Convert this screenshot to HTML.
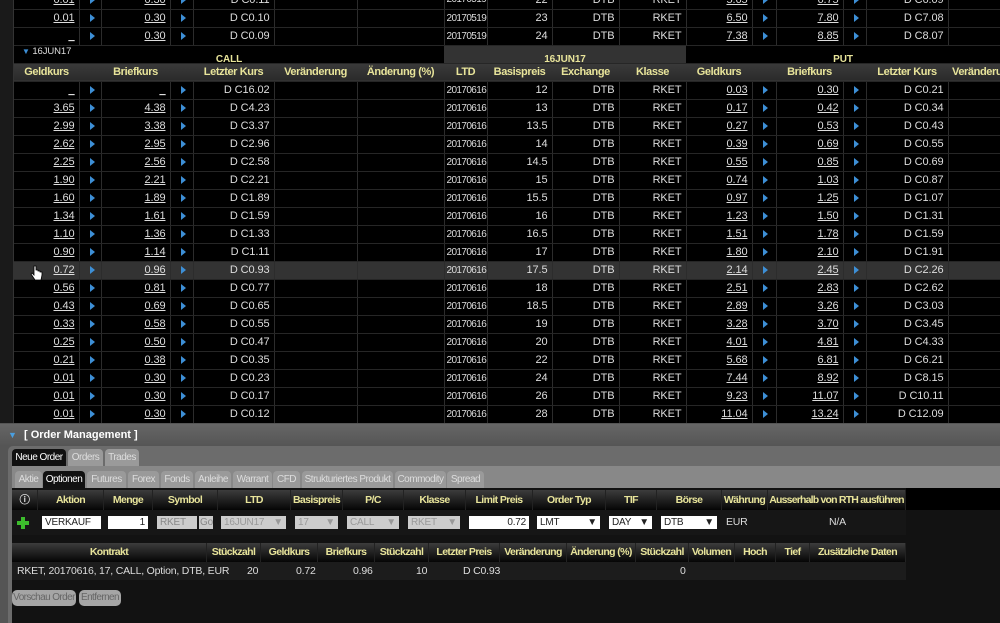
<!DOCTYPE html>
<html><head><meta charset="utf-8">
<style>
*{margin:0;padding:0;box-sizing:border-box}
body{width:1000px;height:623px;overflow:hidden;background:#111;font-family:"Liberation Sans",sans-serif;font-size:10.5px;letter-spacing:-0.2px;color:#ddd;position:relative;white-space:nowrap}
.abs{position:absolute}
table{border-collapse:collapse;table-layout:fixed}
#grid{left:14px;top:-9px;width:986px;font-size:11px;letter-spacing:-0.1px}
#grid td{height:18px;border-right:1px solid #2c2c2c;border-bottom:1px solid #262626;padding:0 4px;text-align:right;white-space:nowrap;overflow:hidden;background:#000}
#grid td.u{text-decoration:underline}
#grid td.l{text-align:left;padding-left:2px;padding-right:0;letter-spacing:-0.6px;font-size:10px}
#grid td.a{text-align:left;padding-left:10px}
#grid tr.hl td{background:#333}
#grid tr.h td{background:linear-gradient(#3a3a3a,#2a2a2a);color:#e8e49a;font-weight:bold;text-align:center;border-right:none;letter-spacing:-0.4px;padding:0}
.ar{display:inline-block;width:0;height:0;border-top:4px solid transparent;border-bottom:4px solid transparent;border-left:5px solid #3d8fd6;vertical-align:middle}
#lstrip{left:0;top:0;width:14px;height:424px;background:#1a1a1a;border-right:1px solid #333}
.y{color:#e8e49a;font-weight:bold}
#om{left:0;top:424px;width:1000px;height:22px;background:linear-gradient(#666,#555);color:#fff;font-weight:bold;font-size:11px;letter-spacing:0;line-height:22px;padding-left:24px}
.tab{position:absolute;height:17px;line-height:17px;text-align:center;background:#9a9a9a;color:#ddd;border-radius:4px 4px 0 0;font-size:10px;letter-spacing:-0.5px;overflow:hidden}
.tab.on{background:#111;color:#fff}
.th{background:linear-gradient(#3c3c3c,#050505);color:#e8e49a;font-weight:bold;text-align:center;height:20px;border-right:1px solid #222;white-space:nowrap;overflow:hidden;letter-spacing:-0.6px}
.in{position:absolute;height:13px;background:#fff;color:#222;font-size:10px;line-height:13px;padding:0 3px;overflow:hidden}
.in.g{background:#ccc;color:#888}
.btn{position:absolute;top:590px;height:16px;line-height:16px;background:#a5a5a5;color:#666;border-radius:5px;font-size:10px;letter-spacing:-0.6px;text-align:center;overflow:hidden}
</style></head><body>
<div class="abs" id="lstrip"></div>
<table class="abs" id="grid">
<colgroup><col style="width:65px"><col style="width:22px"><col style="width:69px"><col style="width:23px"><col style="width:81px"><col style="width:83px"><col style="width:87px"><col style="width:43px"><col style="width:65px"><col style="width:67px"><col style="width:67px"><col style="width:66px"><col style="width:24px"><col style="width:67px"><col style="width:23px"><col style="width:82px"><col style="width:52px"></colgroup>
<tr><td class="u">0.01</td><td class="a"><span class="ar"></span></td><td class="u">0.30</td><td class="a"><span class="ar"></span></td><td>D C0.11</td><td></td><td></td><td class="l">20170519</td><td>22</td><td>DTB</td><td>RKET</td><td class="u">5.65</td><td class="a"><span class="ar"></span></td><td class="u">6.75</td><td class="a"><span class="ar"></span></td><td>D C6.09</td><td></td></tr>
<tr><td class="u">0.01</td><td class="a"><span class="ar"></span></td><td class="u">0.30</td><td class="a"><span class="ar"></span></td><td>D C0.10</td><td></td><td></td><td class="l">20170519</td><td>23</td><td>DTB</td><td>RKET</td><td class="u">6.50</td><td class="a"><span class="ar"></span></td><td class="u">7.80</td><td class="a"><span class="ar"></span></td><td>D C7.08</td><td></td></tr>
<tr><td class="u">_</td><td class="a"><span class="ar"></span></td><td class="u">0.30</td><td class="a"><span class="ar"></span></td><td>D C0.09</td><td></td><td></td><td class="l">20170519</td><td>24</td><td>DTB</td><td>RKET</td><td class="u">7.38</td><td class="a"><span class="ar"></span></td><td class="u">8.85</td><td class="a"><span class="ar"></span></td><td>D C8.07</td><td></td></tr>
<tr><td colspan="7" style="background:#000;position:relative;text-align:center;border-right:none"><span style="position:absolute;left:8px;top:0;font-size:9.5px;color:#ddd"><span style="color:#3d8fd6;font-size:8px">▼</span> 16JUN17</span><span class="y" style="font-size:10px;position:relative;top:5px">CALL</span></td><td colspan="4" style="background:#333;text-align:center;border-right:none"><span class="y" style="font-size:10px;position:relative;top:5px">16JUN17</span></td><td colspan="6" style="background:#000;text-align:center;border-right:none"><span class="y" style="font-size:10px;position:relative;top:5px">PUT</span></td></tr>
<tr class="h"><td>Geldkurs</td><td></td><td>Briefkurs</td><td></td><td>Letzter Kurs</td><td>Veränderung</td><td>Änderung (%)</td><td>LTD</td><td>Basispreis</td><td>Exchange</td><td>Klasse</td><td>Geldkurs</td><td></td><td>Briefkurs</td><td></td><td>Letzter Kurs</td><td style="text-align:left;padding-left:4px">Veränderung</td></tr>
<tr><td class="u">_</td><td class="a"><span class="ar"></span></td><td class="u">_</td><td class="a"><span class="ar"></span></td><td>D C16.02</td><td></td><td></td><td class="l">20170616</td><td>12</td><td>DTB</td><td>RKET</td><td class="u">0.03</td><td class="a"><span class="ar"></span></td><td class="u">0.30</td><td class="a"><span class="ar"></span></td><td>D C0.21</td><td></td></tr>
<tr><td class="u">3.65</td><td class="a"><span class="ar"></span></td><td class="u">4.38</td><td class="a"><span class="ar"></span></td><td>D C4.23</td><td></td><td></td><td class="l">20170616</td><td>13</td><td>DTB</td><td>RKET</td><td class="u">0.17</td><td class="a"><span class="ar"></span></td><td class="u">0.42</td><td class="a"><span class="ar"></span></td><td>D C0.34</td><td></td></tr>
<tr><td class="u">2.99</td><td class="a"><span class="ar"></span></td><td class="u">3.38</td><td class="a"><span class="ar"></span></td><td>D C3.37</td><td></td><td></td><td class="l">20170616</td><td>13.5</td><td>DTB</td><td>RKET</td><td class="u">0.27</td><td class="a"><span class="ar"></span></td><td class="u">0.53</td><td class="a"><span class="ar"></span></td><td>D C0.43</td><td></td></tr>
<tr><td class="u">2.62</td><td class="a"><span class="ar"></span></td><td class="u">2.95</td><td class="a"><span class="ar"></span></td><td>D C2.96</td><td></td><td></td><td class="l">20170616</td><td>14</td><td>DTB</td><td>RKET</td><td class="u">0.39</td><td class="a"><span class="ar"></span></td><td class="u">0.69</td><td class="a"><span class="ar"></span></td><td>D C0.55</td><td></td></tr>
<tr><td class="u">2.25</td><td class="a"><span class="ar"></span></td><td class="u">2.56</td><td class="a"><span class="ar"></span></td><td>D C2.58</td><td></td><td></td><td class="l">20170616</td><td>14.5</td><td>DTB</td><td>RKET</td><td class="u">0.55</td><td class="a"><span class="ar"></span></td><td class="u">0.85</td><td class="a"><span class="ar"></span></td><td>D C0.69</td><td></td></tr>
<tr><td class="u">1.90</td><td class="a"><span class="ar"></span></td><td class="u">2.21</td><td class="a"><span class="ar"></span></td><td>D C2.21</td><td></td><td></td><td class="l">20170616</td><td>15</td><td>DTB</td><td>RKET</td><td class="u">0.74</td><td class="a"><span class="ar"></span></td><td class="u">1.03</td><td class="a"><span class="ar"></span></td><td>D C0.87</td><td></td></tr>
<tr><td class="u">1.60</td><td class="a"><span class="ar"></span></td><td class="u">1.89</td><td class="a"><span class="ar"></span></td><td>D C1.89</td><td></td><td></td><td class="l">20170616</td><td>15.5</td><td>DTB</td><td>RKET</td><td class="u">0.97</td><td class="a"><span class="ar"></span></td><td class="u">1.25</td><td class="a"><span class="ar"></span></td><td>D C1.07</td><td></td></tr>
<tr><td class="u">1.34</td><td class="a"><span class="ar"></span></td><td class="u">1.61</td><td class="a"><span class="ar"></span></td><td>D C1.59</td><td></td><td></td><td class="l">20170616</td><td>16</td><td>DTB</td><td>RKET</td><td class="u">1.23</td><td class="a"><span class="ar"></span></td><td class="u">1.50</td><td class="a"><span class="ar"></span></td><td>D C1.31</td><td></td></tr>
<tr><td class="u">1.10</td><td class="a"><span class="ar"></span></td><td class="u">1.36</td><td class="a"><span class="ar"></span></td><td>D C1.33</td><td></td><td></td><td class="l">20170616</td><td>16.5</td><td>DTB</td><td>RKET</td><td class="u">1.51</td><td class="a"><span class="ar"></span></td><td class="u">1.78</td><td class="a"><span class="ar"></span></td><td>D C1.59</td><td></td></tr>
<tr><td class="u">0.90</td><td class="a"><span class="ar"></span></td><td class="u">1.14</td><td class="a"><span class="ar"></span></td><td>D C1.11</td><td></td><td></td><td class="l">20170616</td><td>17</td><td>DTB</td><td>RKET</td><td class="u">1.80</td><td class="a"><span class="ar"></span></td><td class="u">2.10</td><td class="a"><span class="ar"></span></td><td>D C1.91</td><td></td></tr>
<tr class="hl"><td class="u">0.72</td><td class="a"><span class="ar"></span></td><td class="u">0.96</td><td class="a"><span class="ar"></span></td><td>D C0.93</td><td></td><td></td><td class="l">20170616</td><td>17.5</td><td>DTB</td><td>RKET</td><td class="u">2.14</td><td class="a"><span class="ar"></span></td><td class="u">2.45</td><td class="a"><span class="ar"></span></td><td>D C2.26</td><td></td></tr>
<tr><td class="u">0.56</td><td class="a"><span class="ar"></span></td><td class="u">0.81</td><td class="a"><span class="ar"></span></td><td>D C0.77</td><td></td><td></td><td class="l">20170616</td><td>18</td><td>DTB</td><td>RKET</td><td class="u">2.51</td><td class="a"><span class="ar"></span></td><td class="u">2.83</td><td class="a"><span class="ar"></span></td><td>D C2.62</td><td></td></tr>
<tr><td class="u">0.43</td><td class="a"><span class="ar"></span></td><td class="u">0.69</td><td class="a"><span class="ar"></span></td><td>D C0.65</td><td></td><td></td><td class="l">20170616</td><td>18.5</td><td>DTB</td><td>RKET</td><td class="u">2.89</td><td class="a"><span class="ar"></span></td><td class="u">3.26</td><td class="a"><span class="ar"></span></td><td>D C3.03</td><td></td></tr>
<tr><td class="u">0.33</td><td class="a"><span class="ar"></span></td><td class="u">0.58</td><td class="a"><span class="ar"></span></td><td>D C0.55</td><td></td><td></td><td class="l">20170616</td><td>19</td><td>DTB</td><td>RKET</td><td class="u">3.28</td><td class="a"><span class="ar"></span></td><td class="u">3.70</td><td class="a"><span class="ar"></span></td><td>D C3.45</td><td></td></tr>
<tr><td class="u">0.25</td><td class="a"><span class="ar"></span></td><td class="u">0.50</td><td class="a"><span class="ar"></span></td><td>D C0.47</td><td></td><td></td><td class="l">20170616</td><td>20</td><td>DTB</td><td>RKET</td><td class="u">4.01</td><td class="a"><span class="ar"></span></td><td class="u">4.81</td><td class="a"><span class="ar"></span></td><td>D C4.33</td><td></td></tr>
<tr><td class="u">0.21</td><td class="a"><span class="ar"></span></td><td class="u">0.38</td><td class="a"><span class="ar"></span></td><td>D C0.35</td><td></td><td></td><td class="l">20170616</td><td>22</td><td>DTB</td><td>RKET</td><td class="u">5.68</td><td class="a"><span class="ar"></span></td><td class="u">6.81</td><td class="a"><span class="ar"></span></td><td>D C6.21</td><td></td></tr>
<tr><td class="u">0.01</td><td class="a"><span class="ar"></span></td><td class="u">0.30</td><td class="a"><span class="ar"></span></td><td>D C0.23</td><td></td><td></td><td class="l">20170616</td><td>24</td><td>DTB</td><td>RKET</td><td class="u">7.44</td><td class="a"><span class="ar"></span></td><td class="u">8.92</td><td class="a"><span class="ar"></span></td><td>D C8.15</td><td></td></tr>
<tr><td class="u">0.01</td><td class="a"><span class="ar"></span></td><td class="u">0.30</td><td class="a"><span class="ar"></span></td><td>D C0.17</td><td></td><td></td><td class="l">20170616</td><td>26</td><td>DTB</td><td>RKET</td><td class="u">9.23</td><td class="a"><span class="ar"></span></td><td class="u">11.07</td><td class="a"><span class="ar"></span></td><td>D C10.11</td><td></td></tr>
<tr><td class="u">0.01</td><td class="a"><span class="ar"></span></td><td class="u">0.30</td><td class="a"><span class="ar"></span></td><td>D C0.12</td><td></td><td></td><td class="l">20170616</td><td>28</td><td>DTB</td><td>RKET</td><td class="u">11.04</td><td class="a"><span class="ar"></span></td><td class="u">13.24</td><td class="a"><span class="ar"></span></td><td>D C12.09</td><td></td></tr>
</table>
<svg class="abs" style="left:30px;top:265px" width="14" height="18" viewBox="0 0 14 18"><path d="M4 1 v9 l-2-2 -1 1 4 6 h6 l1-5 v-3 h-2 v-1 h-2 v-1 h-2 v-4 z" fill="#fff" stroke="#000" stroke-width="0.8"/></svg>

<div class="abs" style="left:0;top:423px;width:1000px;height:200px;background:#555"></div>
<div class="abs" id="om"><span style="position:absolute;left:8px;top:0;color:#4a9fe0;font-size:9px">▼</span>[ Order Management ]</div>
<div class="abs" style="left:8px;top:446px;width:992px;height:177px;background:#6c6c6c;border-radius:5px 0 0 0"></div>
<div class="tab on" style="left:12px;top:449px;width:54px">Neue Order</div>
<div class="tab" style="left:68px;top:449px;width:35px">Orders</div>
<div class="tab" style="left:105px;top:449px;width:34px">Trades</div>
<div class="abs" style="left:12px;top:466px;width:988px;height:157px;background:#888"></div>
<div class="tab" style="left:15px;top:471px;width:27px">Aktie</div>
<div class="tab on" style="left:43px;top:471px;width:42px">Optionen</div>
<div class="tab" style="left:87px;top:471px;width:39px">Futures</div>
<div class="tab" style="left:128px;top:471px;width:31px">Forex</div>
<div class="tab" style="left:161px;top:471px;width:32px">Fonds</div>
<div class="tab" style="left:195px;top:471px;width:36px">Anleihe</div>
<div class="tab" style="left:233px;top:471px;width:39px">Warrant</div>
<div class="tab" style="left:273px;top:471px;width:27px">CFD</div>
<div class="tab" style="left:302px;top:471px;width:91px">Strukturiertes Produkt</div>
<div class="tab" style="left:395px;top:471px;width:51px">Commodity</div>
<div class="tab" style="left:447px;top:471px;width:37px">Spread</div>
<div class="abs" style="left:12px;top:488px;width:988px;height:135px;background:#121212"></div>
<div class="abs" style="left:906px;top:488px;width:94px;height:22px;background:#000"></div>
<div class="abs" style="left:12px;top:490px;display:flex;font-size:10.5px;line-height:20px">
<div class="th" style="width:26px;color:#ddd">&#9432;</div><div class="th" style="width:66px">Aktion</div><div class="th" style="width:49px">Menge</div><div class="th" style="width:65px">Symbol</div><div class="th" style="width:73px">LTD</div><div class="th" style="width:52px">Basispreis</div><div class="th" style="width:61px">P/C</div><div class="th" style="width:62px">Klasse</div><div class="th" style="width:67px">Limit Preis</div><div class="th" style="width:73px">Order Typ</div><div class="th" style="width:51px">TIF</div><div class="th" style="width:65px">Börse</div><div class="th" style="width:46px">Währung</div><div class="th" style="width:138px;letter-spacing:-0.8px">Ausserhalb von RTH ausführen</div></div>
<div class="abs" style="left:12px;top:510px;width:894px;height:25px;background:#161616"></div>
<svg class="abs" style="left:17px;top:517px" width="12" height="12" viewBox="0 0 12 12"><path d="M4 0h4v4h4v4h-4v4h-4v-4h-4v-4h4z" fill="#3cbc2c"/></svg>
<div class="in" style="left:42px;top:516px;width:59px">VERKAUF<span style="float:right">▼</span></div>
<div class="in" style="left:108px;top:516px;width:40px;text-align:right">1</div>
<div class="in g" style="left:157px;top:516px;width:40px">RKET</div>
<div class="in g" style="left:199px;top:516px;width:14px;padding:0 1px">Go</div>
<div class="in g" style="left:221px;top:516px;width:65px;color:#999">16JUN17<span style="float:right">▼</span></div>
<div class="in g" style="left:295px;top:516px;width:43px;color:#999">17<span style="float:right">▼</span></div>
<div class="in g" style="left:347px;top:516px;width:52px;color:#999">CALL<span style="float:right">▼</span></div>
<div class="in g" style="left:408px;top:516px;width:52px;color:#999">RKET<span style="float:right">▼</span></div>
<div class="in" style="left:469px;top:516px;width:60px;text-align:right">0.72</div>
<div class="in" style="left:537px;top:516px;width:63px">LMT<span style="float:right">▼</span></div>
<div class="in" style="left:609px;top:516px;width:43px">DAY<span style="float:right">▼</span></div>
<div class="in" style="left:661px;top:516px;width:56px">DTB<span style="float:right">▼</span></div>
<div class="abs" style="left:726px;top:516px;line-height:13px">EUR</div>
<div class="abs" style="left:829px;top:516px;line-height:13px">N/A</div>
<div class="abs" style="left:12px;top:543px;display:flex;font-size:10.5px;line-height:19px">
<div class="th" style="width:195px;height:19px">Kontrakt</div><div class="th" style="width:54px;height:19px">Stückzahl</div><div class="th" style="width:57px;height:19px">Geldkurs</div><div class="th" style="width:57px;height:19px">Briefkurs</div><div class="th" style="width:54px;height:19px">Stückzahl</div><div class="th" style="width:71px;height:19px">Letzter Preis</div><div class="th" style="width:67px;height:19px">Veränderung</div><div class="th" style="width:69px;height:19px">Änderung (%)</div><div class="th" style="width:53px;height:19px">Stückzahl</div><div class="th" style="width:46px;height:19px">Volumen</div><div class="th" style="width:41px;height:19px">Hoch</div><div class="th" style="width:34px;height:19px">Tief</div><div class="th" style="width:96px;height:19px">Zusätzliche Daten</div></div>
<div class="abs" style="left:12px;top:562px;width:894px;height:18px;background:#1c1c1c;line-height:18px">
<span class="abs" style="left:5px">RKET, 20170616, 17, CALL, Option, DTB, EUR</span>
<span class="abs" style="left:235px">20</span><span class="abs" style="left:284px">0.72</span><span class="abs" style="left:341px">0.96</span><span class="abs" style="left:404px">10</span><span class="abs" style="left:451px">D C0.93</span><span class="abs" style="left:668px">0</span></div>
<div class="btn" style="left:12px;width:64px">Vorschau Order</div>
<div class="btn" style="left:79px;width:42px">Entfernen</div>
</body></html>
